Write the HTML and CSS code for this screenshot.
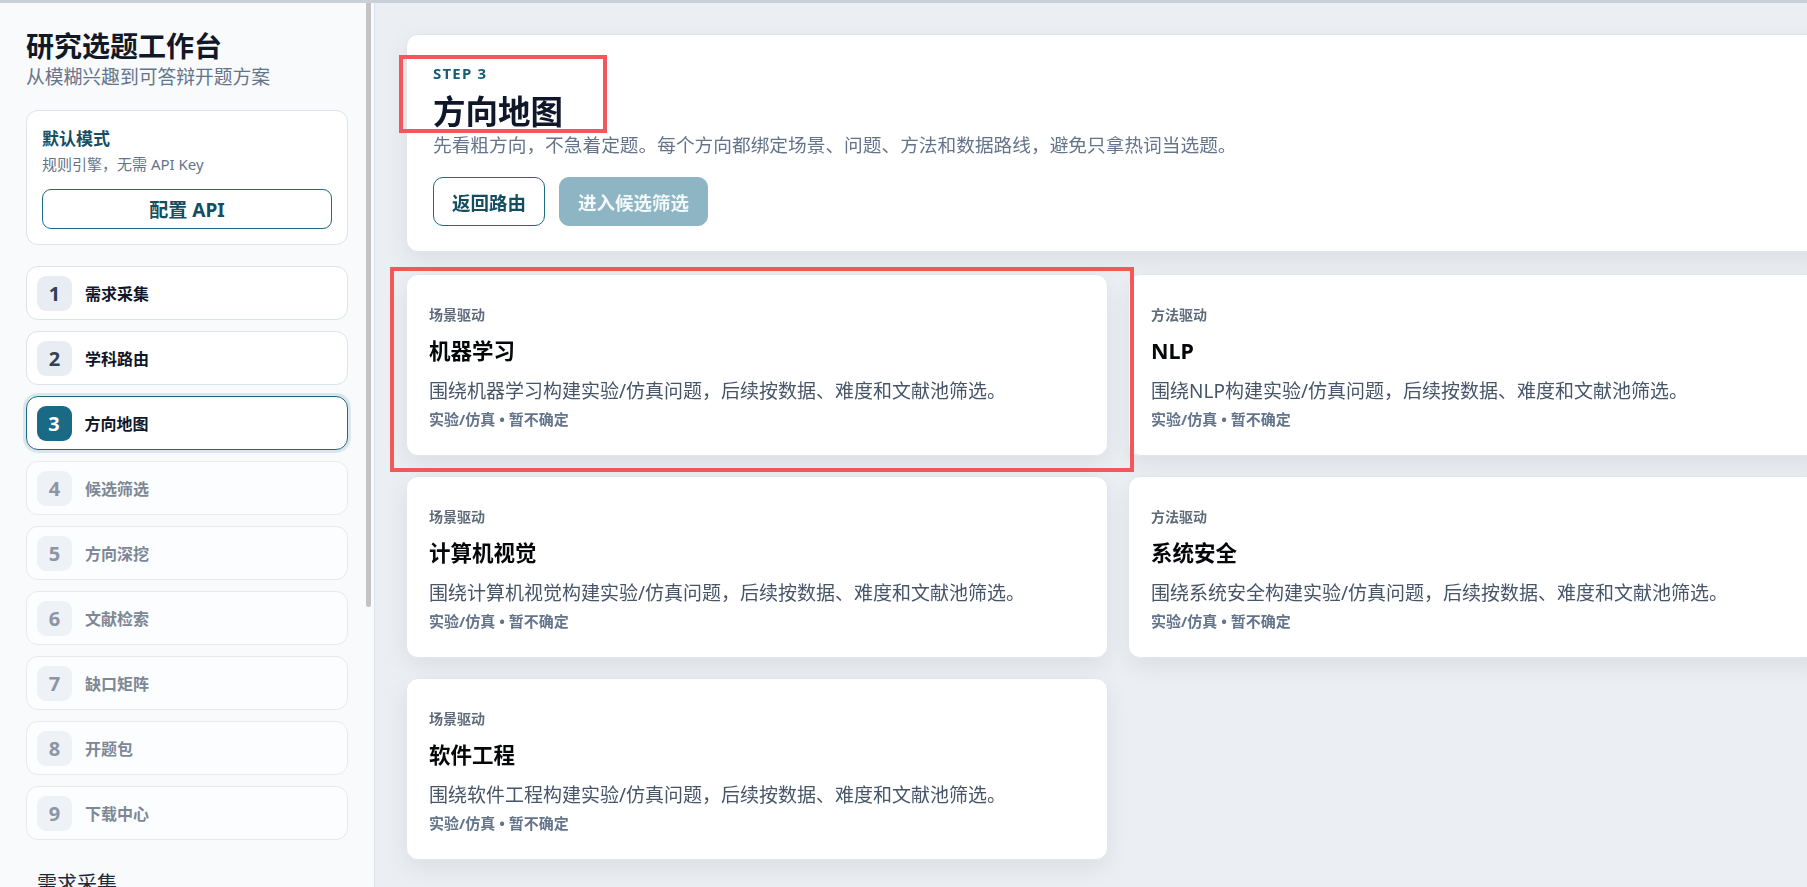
FILE: index.html
```html
<!doctype html>
<html lang="zh-CN">
<head>
  <meta charset="utf-8">
  <meta name="viewport" content="width=device-width, initial-scale=1.0">
  <title>研究选题工作台 - 方向地图</title>
  <link rel="stylesheet" href="styles.css">
</head>
<body>
<div class="app">

  <div class="sidebar-wrap">
  <aside class="sidebar">
    <div class="sidebar-inner">
      <header class="brand">
        <h1>研究选题工作台</h1>
        <p>从模糊兴趣到可答辩开题方案</p>
      </header>

      <section class="mode-card">
        <strong class="mode-title">默认模式</strong>
        <span class="mode-note">规则引擎，无需 API Key</span>
        <button class="btn btn-outline btn-block" type="button">配置 API</button>
      </section>

      <nav class="steps">
        <a class="step" href="#intake"><span class="step-num">1</span><span class="step-label">需求采集</span></a>
        <a class="step" href="#route"><span class="step-num">2</span><span class="step-label">学科路由</span></a>
        <a class="step is-active" href="#map"><span class="step-num">3</span><span class="step-label">方向地图</span></a>
        <a class="step is-locked"><span class="step-num">4</span><span class="step-label">候选筛选</span></a>
        <a class="step is-locked"><span class="step-num">5</span><span class="step-label">方向深挖</span></a>
        <a class="step is-locked"><span class="step-num">6</span><span class="step-label">文献检索</span></a>
        <a class="step is-locked"><span class="step-num">7</span><span class="step-label">缺口矩阵</span></a>
        <a class="step is-locked"><span class="step-num">8</span><span class="step-label">开题包</span></a>
        <a class="step is-locked"><span class="step-num">9</span><span class="step-label">下载中心</span></a>
      </nav>

      <!-- Summary of the current intake, scrolls below the step list -->
      <section class="intake" id="intake">
        <h2>需求采集</h2>
        <p class="intake-hint">用一两句话写下你感兴趣的方向，不必成熟。</p>
        <label class="intake-label" for="interest">研究兴趣</label>
        <textarea class="intake-field intake-area" id="interest">机器学习在工业场景里的应用</textarea>
        <label class="intake-label" for="stage">学历阶段</label>
        <select class="intake-field" id="stage"><option>硕士</option></select>
        <label class="intake-label" for="time">可用时间</label>
        <select class="intake-field" id="time"><option>暂不确定</option></select>
      </section>
    </div>
  </aside>
  <!-- thin scroll thumb, the native bar is hidden -->
  <span class="scroll-thumb"></span>
  </div>

  <main class="main" id="map">
    <div class="main-inner">
      <section class="hero">
        <div class="eyebrow">STEP 3</div>
        <h2 class="hero-title">方向地图</h2>
        <p class="hero-desc">先看粗方向，不急着定题。每个方向都绑定场景、问题、方法和数据路线，避免只拿热词当选题。</p>
        <div class="actions">
          <button class="btn btn-outline" type="button">返回路由</button>
          <button class="btn btn-primary" type="button" disabled>进入候选筛选</button>
        </div>
      </section>

      <section class="map-grid">
        <article class="dir-card">
          <div class="dir-tag">场景驱动</div>
          <h3 class="dir-title">机器学习</h3>
          <p class="dir-desc">围绕机器学习构建实验/仿真问题，后续按数据、难度和文献池筛选。</p>
          <div class="dir-meta">实验/仿真 • 暂不确定</div>
        </article>
        <article class="dir-card">
          <div class="dir-tag">方法驱动</div>
          <h3 class="dir-title">NLP</h3>
          <p class="dir-desc">围绕NLP构建实验/仿真问题，后续按数据、难度和文献池筛选。</p>
          <div class="dir-meta">实验/仿真 • 暂不确定</div>
        </article>
        <article class="dir-card">
          <div class="dir-tag">场景驱动</div>
          <h3 class="dir-title">计算机视觉</h3>
          <p class="dir-desc">围绕计算机视觉构建实验/仿真问题，后续按数据、难度和文献池筛选。</p>
          <div class="dir-meta">实验/仿真 • 暂不确定</div>
        </article>
        <article class="dir-card">
          <div class="dir-tag">方法驱动</div>
          <h3 class="dir-title">系统安全</h3>
          <p class="dir-desc">围绕系统安全构建实验/仿真问题，后续按数据、难度和文献池筛选。</p>
          <div class="dir-meta">实验/仿真 • 暂不确定</div>
        </article>
        <article class="dir-card">
          <div class="dir-tag">场景驱动</div>
          <h3 class="dir-title">软件工程</h3>
          <p class="dir-desc">围绕软件工程构建实验/仿真问题，后续按数据、难度和文献池筛选。</p>
          <div class="dir-meta">实验/仿真 • 暂不确定</div>
        </article>
      </section>
    </div>

    <!-- Review marks drawn over the page -->
    <span class="mark mark-head"></span>
    <span class="mark mark-card"></span>
  </main>

</div>
</body>
</html>
```

FILE: styles.css
```css
/* Base */

html, body {
  height: 100%;
}

body {
  background-color: #ebeef2;
  border-top: 3px solid #c8d1d7;
  box-sizing: border-box;
  color: #0f172a;
  font-family: "Noto Sans", "Noto Sans CJK SC", sans-serif;
  margin: 0;
  overflow: hidden;
}

.app {
  display: flex;
  height: 100%;
}

h1, h2, h3, p {
  margin: 0;
}

/* Buttons */

.btn {
  align-items: center;
  border: 1.5px solid #1d6b83;
  border-radius: 10px;
  box-sizing: border-box;
  cursor: pointer;
  display: inline-flex;
  font-family: inherit;
  font-size: 18.5px;
  font-weight: 700;
  height: 49px;
  justify-content: center;
  padding: 0 18px;
}

.btn-outline {
  background-color: #fff;
  color: #134e63;
}

.btn-primary {
  background-color: #8db5c3;
  border-color: #8db5c3;
  color: #f3f8fa;
}

.btn-primary:disabled {
  cursor: default;
}

.btn-block {
  border-radius: 9px;
  font-size: 19px;
  height: 40px;
  margin-top: 14px;
  width: 100%;
}

/* Sidebar */

.sidebar-wrap {
  flex: 0 0 375px;
  position: relative;
}

.sidebar {
  background-color: #f8fafc;
  border-right: 1px solid #dde3ea;
  box-sizing: border-box;
  height: 100%;
  overflow-y: auto;
  padding: 26px 0 40px 26px;
  scrollbar-width: none;
}

.sidebar::-webkit-scrollbar {
  display: none;
}

.scroll-thumb {
  background-color: #c4c4c4;
  border-radius: 0 0 2px 2px;
  height: 604px;
  left: 366px;
  position: absolute;
  top: 0;
  width: 5px;
}

.sidebar-inner {
  width: 322px;
}

.brand h1 {
  color: #111827;
  font-size: 28px;
  font-weight: 700;
  line-height: 34px;
}

.brand p {
  color: #64748b;
  font-size: 18.8px;
  line-height: 26px;
  margin-top: 1px;
}

.mode-card {
  background-color: #fff;
  border: 1px solid #dde3ea;
  border-radius: 12px;
  margin-top: 20px;
  padding: 16px 15px 15px;
}

.mode-title {
  color: #164e63;
  display: block;
  font-size: 17px;
  font-weight: 700;
  line-height: 24px;
}

.mode-note {
  color: #64748b;
  display: block;
  font-size: 15px;
  line-height: 22px;
  margin-top: 2px;
}

.steps {
  display: flex;
  flex-direction: column;
  gap: 11px;
  margin-top: 21px;
}

.step {
  align-items: center;
  background-color: #fff;
  border: 1px solid #dde3ea;
  border-radius: 12px;
  box-sizing: border-box;
  display: flex;
  gap: 13px;
  height: 54px;
  padding: 0 10px;
  text-decoration: none;
}

.step-num {
  align-items: center;
  background-color: #e8edf4;
  border-radius: 9px;
  color: #334155;
  display: flex;
  flex: none;
  font-size: 20px;
  font-weight: 700;
  height: 35px;
  justify-content: center;
  width: 35px;
}

.step-label {
  color: #0f172a;
  font-size: 16px;
  font-weight: 700;
}

.step.is-active {
  border: 1.5px solid #1d6b83;
  box-shadow: 0 0 0 3px #dce7ec;
  padding: 0 9.5px;
}

.step.is-active .step-num {
  background-color: #1a6a85;
  color: #fff;
}

.step.is-locked {
  background-color: #fcfdfe;
  border-color: #e6eaef;
}

.step.is-locked .step-num {
  background-color: #eef1f6;
  color: #8b95a3;
}

.step.is-locked .step-label {
  color: #7d8796;
}

/* Intake summary under the steps */

.intake {
  padding: 0 11px;
}

.intake h2 {
  color: #1e293b;
  font-size: 20px;
  font-weight: 400;
  line-height: 28px;
  margin-top: 30px;
}

.intake-hint {
  color: #64748b;
  font-size: 15px;
  line-height: 24px;
  margin-top: 10px;
}

.intake-label {
  color: #334155;
  display: block;
  font-size: 15px;
  font-weight: 700;
  line-height: 22px;
  margin: 12px 0 6px;
}

.intake-field {
  background-color: #fff;
  border: 1px solid #dde3ea;
  border-radius: 8px;
  box-sizing: border-box;
  color: #0f172a;
  display: block;
  font-family: inherit;
  font-size: 15px;
  height: 40px;
  padding: 0 10px;
  width: 100%;
}

.intake-area {
  height: 120px;
  padding: 10px;
  resize: none;
}

/* Main column */

.main {
  flex: 1;
  min-width: 0;
  overflow: hidden;
  padding: 31px 0 0 31px;
  position: relative;
}

.main-inner {
  width: 1424px;
}

.hero {
  background-color: #fff;
  border: 1px solid #dfe4eb;
  border-radius: 12px;
  box-shadow: 0 8px 24px rgba(15, 23, 42, 0.07);
  margin-bottom: 22px;
  padding: 28px 26px 25px;
}

.eyebrow {
  color: #155e75;
  font-size: 15px;
  font-weight: 700;
  letter-spacing: 1.2px;
  line-height: 20px;
}

.hero-title {
  color: #0f172a;
  font-size: 32.5px;
  font-weight: 700;
  line-height: 38px;
  margin-top: 10px;
}

.hero-desc {
  color: #64748b;
  font-size: 18.7px;
  line-height: 28px;
}

.actions {
  display: flex;
  gap: 14px;
  margin-top: 18px;
}

.map-grid {
  display: grid;
  gap: 20px;
  grid-template-columns: repeat(2, 702px);
}

.dir-card {
  background-color: #fff;
  border: 1px solid #e1e6ed;
  border-radius: 12px;
  box-shadow: 0 8px 24px rgba(15, 23, 42, 0.07);
  padding: 30px 22px 26.5px;
}

.dir-tag {
  color: #5f6b7a;
  font-size: 14px;
  font-weight: 700;
  line-height: 20px;
}

.dir-title {
  color: #05070b;
  font-size: 21.5px;
  font-weight: 700;
  line-height: 30px;
  margin-top: 11px;
}

.dir-desc {
  color: #475569;
  font-size: 19px;
  line-height: 28px;
  margin-top: 11px;
}

.dir-meta {
  color: #64748b;
  font-size: 15px;
  font-weight: 700;
  line-height: 20px;
  margin-top: 3.5px;
}

/* Red review marks */

.mark {
  border: 4px solid #f45757;
  box-sizing: border-box;
  pointer-events: none;
  position: absolute;
}

.mark-head {
  height: 78px;
  left: 24px;
  top: 52px;
  width: 208px;
}

.mark-card {
  height: 205px;
  left: 15px;
  top: 264px;
  width: 744px;
}
```
